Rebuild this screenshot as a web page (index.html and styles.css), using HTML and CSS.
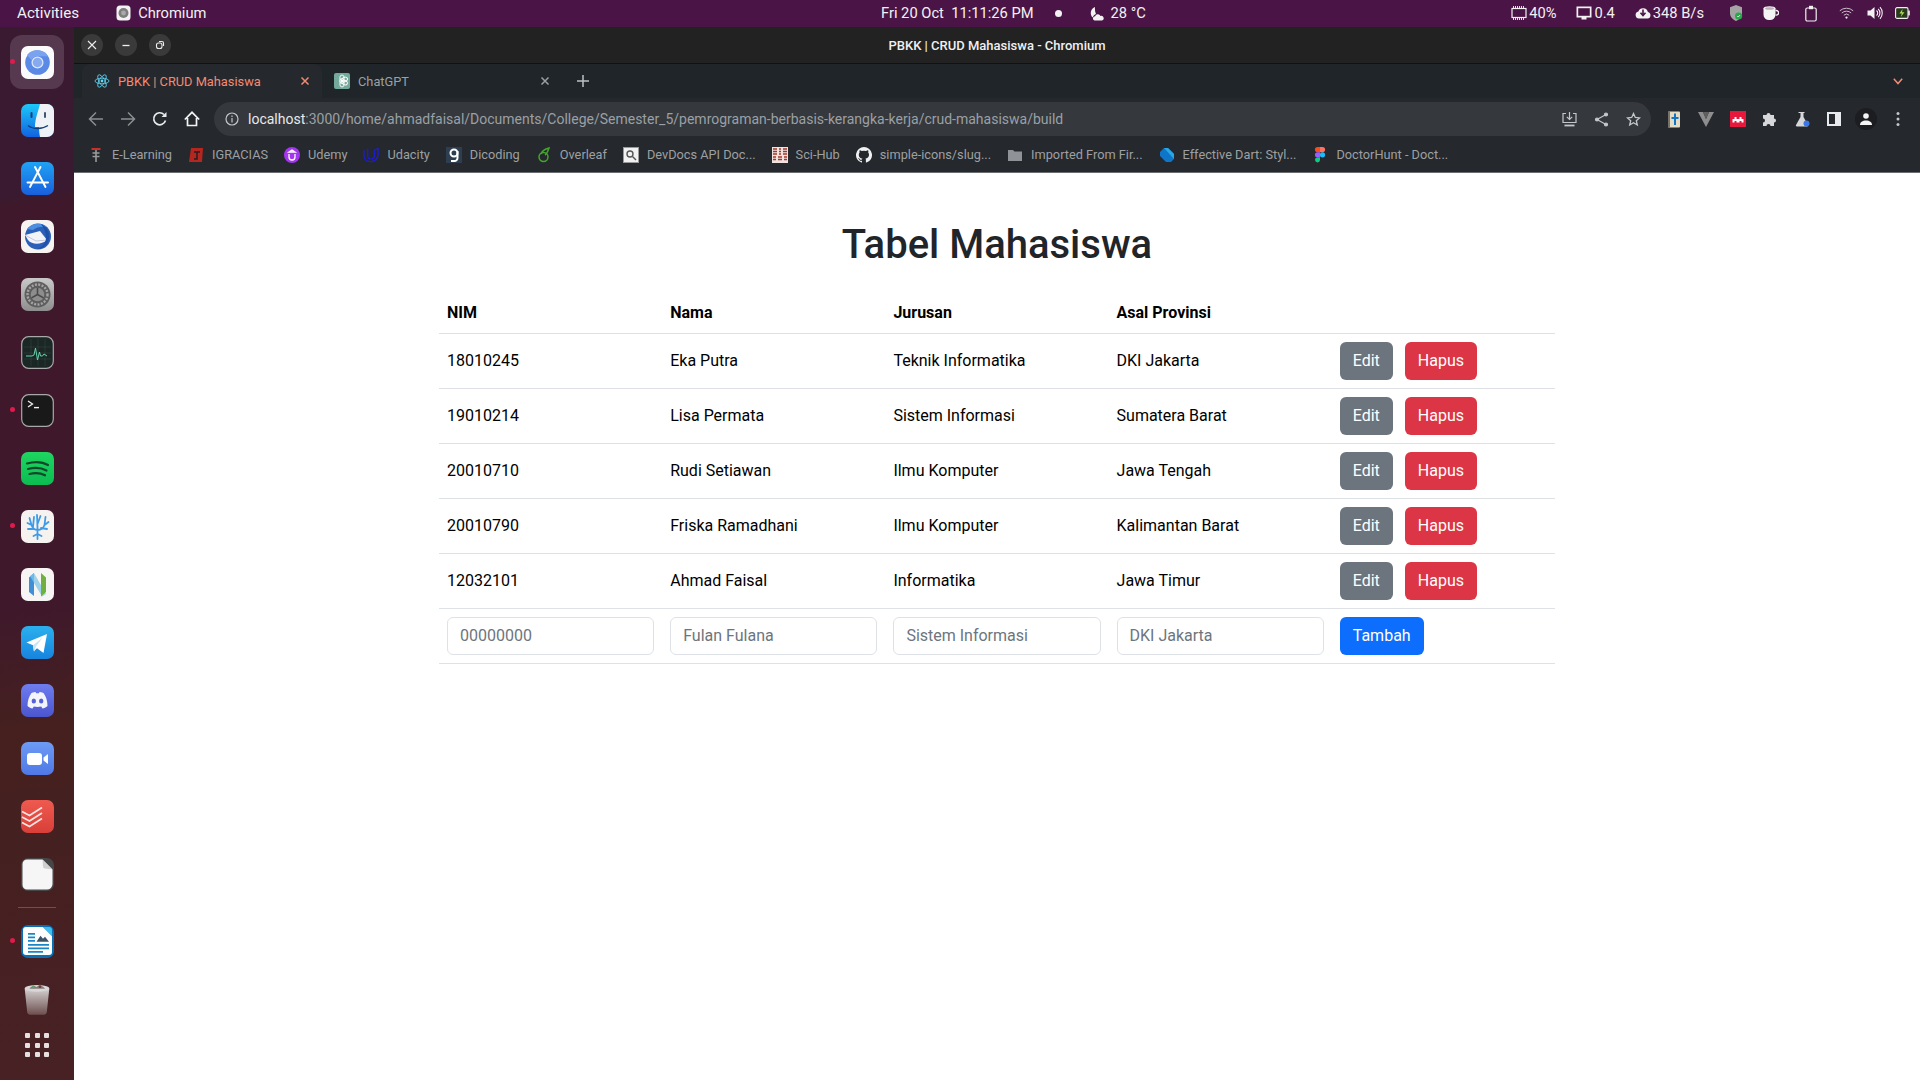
FILE: index.html
```html
<!DOCTYPE html>
<html lang="id">
<head>
    <meta charset="UTF-8">
    <title>PBKK | CRUD Mahasiswa</title>
    <link rel="stylesheet" href="styles.css">
</head>
<body>
    <!-- gnome top bar -->
    <div class="topbar">
        <div class="topbar-left">
            <span class="activities">Activities</span>
            <span class="app-menu">
                <svg width="15" height="16" viewBox="0 0 15 16"><rect x="0.5" y="0.5" width="14" height="15" rx="3.5" fill="#f2f2f2"/><circle cx="7.5" cy="8" r="5" fill="#7d7d7d"/><circle cx="7.5" cy="8" r="2.4" fill="#a9a9a9"/></svg>
                Chromium
            </span>
        </div>
        <div class="topbar-center">
            <span class="clock">Fri 20 Oct&nbsp; 11:11:26 PM</span>
            <span class="rec-dot"></span>
            <svg class="moon" width="15" height="15" viewBox="0 0 15 15"><path d="M6 1 A6.5 6.5 0 0 0 3.500 11.500 C4.500 9.500 5.500 8.500 7 8 C6 6 5.700 3.500 6 1Z" fill="#f2f2f2"/><path d="M5.500 14.500 a2.200 2.200 0 0 1 .6-4.300 a2.900 2.900 0 0 1 5.400-.3 a2.300 2.300 0 0 1 1.500 4.600z" fill="#f2f2f2"/></svg>
            <span>28 °C</span>
        </div>
        <div class="topbar-right">
            <span class="stat">
                <svg width="16" height="16" viewBox="0 0 16 16" fill="none" stroke="#f2f2f2"><rect x="1" y="3.500" width="14" height="9" stroke-width="1.200"/><path d="M2.500 1v2M4.500 1v2M6.500 1v2M8.500 1v2M10.500 1v2M12.500 1v2M2.500 13v2M4.500 13v2M6.500 13v2M8.500 13v2M10.500 13v2M12.500 13v2" stroke-width=".9"/></svg>
                40%
            </span>
            <span class="stat">
                <svg width="16" height="16" viewBox="0 0 16 16"><path d="M0.5 1.500h15v11h-5v2h-5v-2h-5z" fill="#f2f2f2"/><rect x="2.200" y="3.200" width="11.600" height="7.600" fill="#4b1446"/></svg>
                0.4
            </span>
            <span class="stat">
                <svg width="16" height="14" viewBox="0 0 16 14"><path d="M4 12.500 a3.600 3.600 0 0 1-.6-7.100 a5 5 0 0 1 9.500 .6 a3.300 3.300 0 0 1-.4 6.500z" fill="#f2f2f2"/><path d="M8 3.500v5M5.500 6.800L8 9.600l2.500-2.800" stroke="#4b1446" stroke-width="1.600" fill="none"/></svg>
                348 B/s
            </span>
            <span class="tray">
                <svg class="tray-shield" width="14" height="18" viewBox="0 0 14 18"><path d="M7 1 L13 3.200 V9 C13 13 10 15.600 7 17 C4 15.600 1 13 1 9 V3.200Z" fill="#a4a4a4"/><circle cx="9.600" cy="12" r="3.600" fill="#2aa84a"/><path d="M8.200 12l1 1 1.800-1.900" stroke="#fff" stroke-width=".8" fill="none"/></svg>
                <svg class="tray-cup" width="16" height="16" viewBox="0 0 16 16"><path d="M.5 3.500h12v6a5.500 5.500 0 0 1-5.500 5.500H6a5.500 5.500 0 0 1-5.500-5.500z" fill="#f4f4f4"/><ellipse cx="6.500" cy="3.500" rx="6" ry="2.300" fill="#f4f4f4"/><ellipse cx="6.500" cy="3.500" rx="4.500" ry="1.300" fill="#b9b3b8"/><path d="M12.500 5.500h.8a1.900 1.900 0 0 1 0 4.600h-.8" fill="none" stroke="#f4f4f4" stroke-width="1.300"/></svg>
                <svg class="tray-clip" width="12" height="17" viewBox="0 0 12 17" fill="none" stroke="#f2f2f2" stroke-width="1.200"><rect x="0.800" y="3" width="10.400" height="13" rx="1.500"/><rect x="4" y="0.800" width="4" height="3.400" fill="#f2f2f2" stroke="none"/></svg>
                <svg class="tray-wifi" width="15" height="12" viewBox="0 0 15 12" fill="none" stroke="#c9bcc7" stroke-width="1"><path d="M.8 3.800a10 10 0 0 1 13.400 0"/><path d="M2.800 6a7 7 0 0 1 9.400 0"/><path d="M4.800 8.200a4 4 0 0 1 5.400 0"/><circle cx="7.500" cy="10.600" r="1.100" fill="#f2f2f2" stroke="none"/></svg>
                <svg class="tray-vol" width="16" height="14" viewBox="0 0 16 14" fill="none" stroke="#f2f2f2" stroke-width="1.100"><path d="M0.500 4.500h3l4-3.500v12l-4-3.500h-3z" fill="#f2f2f2" stroke="none"/><path d="M9.500 4.500a3.200 3.200 0 0 1 0 5"/><path d="M11.200 2.800a6 6 0 0 1 0 8.400"/><path d="M13 1.200a8.600 8.600 0 0 1 0 11.600"/></svg>
                <svg width="15" height="12" viewBox="0 0 15 12"><rect x="0.600" y="0.600" width="12.400" height="10.800" rx="1.500" fill="#2b3a1e" stroke="#f2f2f2" stroke-width="1.100"/><rect x="13.200" y="3.600" width="1.600" height="4.800" fill="#f2f2f2"/><path d="M7.600 2 L4.400 6.600h2.400L5.800 10l3.600-4.800H7z" fill="#a6e05a"/></svg>
            </span>
        </div>
    </div>

    <div class="desktop">
        <!-- dock -->
        <div class="dock">
            <div class="dock-item active">
                <span class="running"></span>
                <svg class="dock-icon" viewBox="0 0 33 33"><rect width="33" height="33" rx="7" fill="#fbfbfb"/><circle cx="16.500" cy="16.500" r="12.300" fill="#5b8ae6"/><path d="M16.500 4.200a12.300 12.300 0 0 1 10.600 6H16.500a6.500 6.500 0 0 0-6 4L6 9A12.300 12.300 0 0 1 16.500 4.200z" fill="#7ba2ee"/><circle cx="16.500" cy="16.500" r="5.400" fill="#86aaf0" stroke="#d9e5fb" stroke-width="1.300"/></svg>
            </div>
            <div class="dock-item">
                <svg class="dock-icon" viewBox="0 0 33 33"><defs><linearGradient id="fn" x1="0" y1="0" x2="0" y2="1"><stop offset="0" stop-color="#1cc8fb"/><stop offset="1" stop-color="#1262e0"/></linearGradient></defs><rect width="33" height="33" rx="7" fill="url(#fn)"/><path d="M19 0h7a7 7 0 0 1 7 7v19a7 7 0 0 1-7 7H19c-.6-3-1-6-1-10h-4c0-8 3-15 5-23z" fill="#eef2f7"/><rect x="9.500" y="8" width="2" height="6" rx="1" fill="#123d7a"/><rect x="23" y="8" width="2" height="6" rx="1" fill="#41566f"/><path d="M7 21.500c5 4 14 4 20 0" fill="none" stroke="#123d7a" stroke-width="1.300"/></svg>
            </div>
            <div class="dock-item">
                <svg class="dock-icon" viewBox="0 0 33 33"><defs><linearGradient id="as" x1="0" y1="0" x2="0" y2="1"><stop offset="0" stop-color="#1ea3f5"/><stop offset="1" stop-color="#1a5fdc"/></linearGradient></defs><rect width="33" height="33" rx="7" fill="url(#as)"/><path d="M14 5l10.500 20M19.500 5L9 25M6.500 20.500h20.500" stroke="#fff" stroke-width="1.900" stroke-linecap="round" fill="none"/></svg>
            </div>
            <div class="dock-item">
                <svg class="dock-icon" viewBox="0 0 33 33"><rect width="33" height="33" rx="7" fill="#f7f3f1"/><circle cx="17" cy="16.500" r="13" fill="#2c5fb8"/><path d="M6 9c5-6 14-7 20-2-5-1-11 0-14 3z" fill="#4c8fe0"/><path d="M4 15l15-4 7 9c-6 5-15 5-19 0z" fill="#f2f3f8"/><path d="M4 15l11 6 11-1" fill="none" stroke="#b5bdd6" stroke-width=".8"/><path d="M20 4c7 3 10 11 7 18-2 4-6 7-11 7 5-2 9-6 9-11 0-6-2-10-5-14z" fill="#1f4fa6"/></svg>
            </div>
            <div class="dock-item">
                <svg class="dock-icon" viewBox="0 0 33 33"><defs><linearGradient id="st" x1="0" y1="0" x2="0" y2="1"><stop offset="0" stop-color="#c8c8c8"/><stop offset="1" stop-color="#8e8e8e"/></linearGradient></defs><rect width="33" height="33" rx="7" fill="url(#st)"/><circle cx="16.500" cy="16.500" r="13" fill="#5e5e5e"/><circle cx="16.500" cy="16.500" r="10" fill="none" stroke="#a4a4a4" stroke-width="2.400" stroke-dasharray="2 1.400"/><circle cx="16.500" cy="16.500" r="6.800" fill="#8d8d8d"/><path d="M16.500 16.500V9.700M16.500 16.500l6 3.400M16.500 16.500l-6 3.400" stroke="#4a4a4a" stroke-width="1.600"/></svg>
            </div>
            <div class="dock-item">
                <svg class="dock-icon" viewBox="0 0 33 33"><rect x=".7" y=".7" width="31.600" height="31.600" rx="7" fill="#1b2724" stroke="#a8a8a8" stroke-width="1.200"/><path d="M3 11h27M3 17h27M3 23h27M10 3v27M17 3v27M24 3v27" stroke="#33433f" stroke-width=".6"/><path d="M5 20h6l2-1 1.500-7 2 12 2-8 1 4h2l1.500-2 3 2" fill="none" stroke="#66d2ab" stroke-width="1"/></svg>
            </div>
            <div class="dock-item">
                <span class="running"></span>
                <svg class="dock-icon" viewBox="0 0 33 33"><rect x=".7" y=".7" width="31.600" height="31.600" rx="7" fill="#191919" stroke="#a8a8a8" stroke-width="1.200"/><path d="M7 7l4.500 3L7 13" fill="none" stroke="#f0f0f0" stroke-width="1.300"/><path d="M13 13.600h5" stroke="#f0f0f0" stroke-width="1.400"/></svg>
            </div>
            <div class="dock-item">
                <svg class="dock-icon" viewBox="0 0 33 33"><defs><linearGradient id="sp" x1="0" y1="0" x2="0" y2="1"><stop offset="0" stop-color="#1ed660"/><stop offset="1" stop-color="#0cbc52"/></linearGradient></defs><rect width="33" height="33" rx="7" fill="url(#sp)"/><path d="M6 11.500c7-2 15-2 21 1.500M7 17c6-1.600 13-1.400 18.500 1.500M8.500 22c5-1.200 11-1 15.500 1.300" fill="none" stroke="#14472a" stroke-width="2.200" stroke-linecap="round"/></svg>
            </div>
            <div class="dock-item">
                <span class="running"></span>
                <svg class="dock-icon" viewBox="0 0 33 33"><rect width="33" height="33" rx="7" fill="#f6f2ef"/><path d="M16.500 29V18M16.500 20c-3 0-5-2-6-5M10.500 15l-2-7M10.500 15l-4-2M12 17l1-10M16.500 18l-.5-13M16.500 14l3-8M16.500 20c3 0 6-2 7-5M23.500 15l1-8M23.500 15l4-3M20 18l6 1M13 19l-6 0M16.500 24l4 2M16.500 24l-4 2" fill="none" stroke="#3f9be6" stroke-width="1.800" stroke-linecap="round"/></svg>
            </div>
            <div class="dock-item">
                <svg class="dock-icon" viewBox="0 0 33 33"><rect width="33" height="33" rx="7" fill="#f6f5f3"/><path d="M8 9.500l5-4.500v23l-5-4z" fill="#3f8fd6"/><path d="M13 5l12 21-4 2.500L9 8z" fill="#7fc5e6" opacity=".75"/><path d="M20 5l5 4.500V24l-5 4.500z" fill="#6fb03e"/></svg>
            </div>
            <div class="dock-item">
                <svg class="dock-icon" viewBox="0 0 33 33"><defs><linearGradient id="tg" x1="0" y1="0" x2="0" y2="1"><stop offset="0" stop-color="#2bb0ee"/><stop offset="1" stop-color="#1784de"/></linearGradient></defs><rect width="33" height="33" rx="7" fill="url(#tg)"/><path d="M5.500 16.500L26 8l-3.500 19-6.500-4.800-3.200 3-.8-6z" fill="#fff"/><path d="M12 19.200l10-8-7 9-1.800 5.500z" fill="#cde4f3"/></svg>
            </div>
            <div class="dock-item">
                <svg class="dock-icon" viewBox="0 0 33 33"><defs><linearGradient id="dc" x1="0" y1="0" x2="0" y2="1"><stop offset="0" stop-color="#6e7df0"/><stop offset="1" stop-color="#4b55cf"/></linearGradient></defs><rect width="33" height="33" rx="7" fill="url(#dc)"/><path d="M10.500 9c2-.7 3.500-1 4-1l.6 1.200h2.800L18.500 8c.5 0 2 .3 4 1 2.500 3.500 4 7.500 4 13-1.700 1.500-3.500 2.300-5 2.500l-1.300-2c-2.500.6-4.800.6-7.400 0l-1.300 2c-1.500-.2-3.300-1-5-2.500 0-5.500 1.500-9.500 4-13z" fill="#f4f4fb"/><ellipse cx="12.800" cy="17" rx="2.200" ry="2.500" fill="#5862d8"/><ellipse cx="20.200" cy="17" rx="2.200" ry="2.500" fill="#5862d8"/></svg>
            </div>
            <div class="dock-item">
                <svg class="dock-icon" viewBox="0 0 33 33"><defs><linearGradient id="zm" x1="0" y1="0" x2="0" y2="1"><stop offset="0" stop-color="#6d9bf5"/><stop offset="1" stop-color="#4f78e6"/></linearGradient></defs><rect width="33" height="33" rx="7" fill="url(#zm)"/><rect x="6" y="11" width="15" height="12" rx="3" fill="#fff"/><path d="M22.500 15.500l4.500-3.500v10l-4.500-3.500z" fill="#fff"/></svg>
            </div>
            <div class="dock-item">
                <svg class="dock-icon" viewBox="0 0 33 33"><defs><linearGradient id="td" x1="0" y1="0" x2="0" y2="1"><stop offset="0" stop-color="#ee5a50"/><stop offset="1" stop-color="#d83f38"/></linearGradient></defs><rect width="33" height="33" rx="7" fill="url(#td)"/><path d="M1 11.500l7.500 4 12.500-8M1 17l7.500 4 12.500-8M1 22.500l7.500 4 12.500-8" fill="none" stroke="#fbe5e2" stroke-width="1.700"/></svg>
            </div>
            <div class="dock-item">
                <svg class="dock-icon" viewBox="0 0 33 33"><rect width="33" height="33" rx="7" fill="#464646"/><path d="M6 1.500h15.500l10 10V26a5.500 5.500 0 0 1-5.500 5.500H6A4.500 4.500 0 0 1 1.500 27V6A4.500 4.500 0 0 1 6 1.500z" fill="#f6f6f6"/><path d="M21.500 1.500l.5 7a2 2 0 0 0 2 2l7.500 1z" fill="#cfcfcf"/></svg>
            </div>
            <div class="dock-sep"></div>
            <div class="dock-item">
                <span class="running"></span>
                <svg class="dock-icon" viewBox="0 0 33 33"><rect width="33" height="33" rx="7" fill="#0a6fb5"/><path d="M2 5a3 3 0 0 1 3-3h17l9 9v16a3 3 0 0 1-3 3H5a3 3 0 0 1-3-3z" fill="#fdfdfd"/><path d="M22 2h6a3 3 0 0 1 3 3v6z" fill="#3fc0ec"/><path d="M7 8h7v1.700H7zM7 11.500h7v1.700H7zM7 15h7v1.700H7zM7 19h21v1.700H7zM7 22.500h21v1.700H7zM7 26h15v1.700H7z" fill="#1b86c5"/><path d="M15.500 16.800l4-6 2.500 3 2-2 4 5z" fill="#3c5566"/></svg>
            </div>
            <div class="dock-item">
                <svg class="dock-icon trash" viewBox="0 0 33 38"><defs><linearGradient id="tr" x1="0" y1="0" x2="0" y2="1"><stop offset="0" stop-color="#d3cfcf"/><stop offset="1" stop-color="#6d4f4f"/></linearGradient></defs><path d="M2 7h29l-3 28a3 3 0 0 1-3 2.500H8A3 3 0 0 1 5 35z" fill="url(#tr)"/><ellipse cx="16.500" cy="6.500" rx="14.500" ry="4" fill="#d8d6d6"/><path d="M8 6l4-3 4 2 4-3 4 3 2 2-18 0z" fill="#867c7c"/><circle cx="12" cy="5" r="1.500" fill="#54a86a"/><circle cx="20" cy="4.500" r="1.500" fill="#704030"/></svg>
            </div>
            <div class="dock-item apps">
                <div class="apps-grid"><i></i><i></i><i></i><i></i><i></i><i></i><i></i><i></i><i></i></div>
            </div>
        </div>

        <div class="window">
            <div class="titlebar">
                <div class="win-buttons">
                    <span class="win-btn"><svg width="10" height="10" viewBox="0 0 10 10"><path d="M1 1l8 8M9 1l-8 8" stroke="#eee" stroke-width="1.100"/></svg></span>
                    <span class="win-btn"><svg width="10" height="10" viewBox="0 0 10 10"><path d="M1.500 5.500h7" stroke="#eee" stroke-width="1.300"/></svg></span>
                    <span class="win-btn"><svg width="10" height="10" viewBox="0 0 10 10" fill="none" stroke="#eee" stroke-width="1.100"><rect x="1.500" y="3" width="5.500" height="5.500" rx="2"/><path d="M4 1.500h3a1.500 1.500 0 0 1 1.500 1.500v3"/></svg></span>
                </div>
                <div class="win-title">PBKK | CRUD Mahasiswa - Chromium</div>
            </div>

            <div class="tabstrip">
                <div class="tab active">
                    <svg class="favicon" width="16" height="16" viewBox="0 0 16 16" fill="none" stroke="#61dafb" stroke-width=".8"><ellipse cx="8" cy="8" rx="7" ry="2.800"/><ellipse cx="8" cy="8" rx="7" ry="2.800" transform="rotate(60 8 8)"/><ellipse cx="8" cy="8" rx="7" ry="2.800" transform="rotate(120 8 8)"/><circle cx="8" cy="8" r="1.400" fill="#61dafb" stroke="none"/></svg>
                    <span class="tab-title">PBKK | CRUD Mahasiswa</span>
                    <svg class="tab-close" width="10" height="10" viewBox="0 0 10 10"><path d="M1.500 1.500l7 7M8.500 1.500l-7 7" stroke="#f28b74" stroke-width="1.500"/></svg>
                </div>
                <div class="tab">
                    <svg class="favicon" width="16" height="16" viewBox="0 0 16 16"><rect width="16" height="16" rx="2" fill="#74aa9c"/><g fill="none" stroke="#fff" stroke-width=".9"><circle cx="8" cy="8" r="2.400"/><ellipse cx="8" cy="5" rx="2.200" ry="3"/><ellipse cx="8" cy="11" rx="2.200" ry="3"/><ellipse cx="8" cy="5" rx="2.200" ry="3" transform="rotate(60 8 8)"/><ellipse cx="8" cy="5" rx="2.200" ry="3" transform="rotate(120 8 8)"/></g></svg>
                    <span class="tab-title">ChatGPT</span>
                    <svg class="tab-close" width="10" height="10" viewBox="0 0 10 10"><path d="M1.500 1.500l7 7M8.500 1.500l-7 7" stroke="#9aa0a6" stroke-width="1.500"/></svg>
                </div>
                <svg class="new-tab" width="12" height="12" viewBox="0 0 12 12"><path d="M6 0v12M0 6h12" stroke="#bdc1c6" stroke-width="1.500"/></svg>
                <svg class="tab-search" width="10" height="7" viewBox="0 0 10 7"><path d="M.8.8L5 5.500 9.200.8" fill="none" stroke="#f28b74" stroke-width="1.500"/></svg>
            </div>

            <div class="toolbar">
                <span class="tool-btn"><svg width="16" height="16" viewBox="0 0 16 16" fill="none" stroke="#8b8e92" stroke-width="1.500"><path d="M15 8H2M8 1.500L1.500 8 8 14.500"/></svg></span>
                <span class="tool-btn"><svg width="16" height="16" viewBox="0 0 16 16" fill="none" stroke="#8b8e92" stroke-width="1.500"><path d="M1 8h13M8 1.500L14.500 8 8 14.500"/></svg></span>
                <span class="tool-btn"><svg width="16" height="16" viewBox="0 0 16 16" fill="none" stroke="#e8eaed" stroke-width="1.700"><path d="M13.500 9.500A6 6 0 1 1 12 3.500"/><path d="M14.500 1v5h-5z" fill="#e8eaed" stroke="none"/></svg></span>
                <span class="tool-btn"><svg width="16" height="16" viewBox="0 0 16 16" fill="none" stroke="#f1f3f4" stroke-width="1.700"><path d="M.8 8.500L8 1.300l7.200 7.200M3.500 7v7.500h9V7"/></svg></span>
                <div class="omnibox">
                    <svg class="info" width="14" height="14" viewBox="0 0 14 14" fill="none" stroke="#c4c7ca" stroke-width="1.200"><circle cx="7" cy="7" r="6"/><path d="M7 6v4.500M7 3.500v1.500"/></svg>
                    <span class="url"><span class="host">localhost</span>:3000/home/ahmadfaisal/Documents/College/Semester_5/pemrograman-berbasis-kerangka-kerja/crud-mahasiswa/build</span>
                    <span class="omni-actions">
                        <svg width="15" height="15" viewBox="0 0 15 15" fill="none" stroke="#c4c7ca" stroke-width="1.200"><path d="M4 1.500H1v9h13v-9h-3"/><path d="M7.500 0v7M4.800 4.800l2.700 2.700 2.700-2.700"/><path d="M2.500 13.500h10" stroke-width="1.800"/></svg>
                        <svg width="15" height="15" viewBox="0 0 15 15" fill="#c4c7ca" stroke="#c4c7ca" stroke-width="1.200"><circle cx="12" cy="2.500" r="1.500"/><circle cx="3" cy="7.500" r="1.500"/><circle cx="12" cy="12.500" r="1.500"/><path d="M12 2.500l-9 5 9 5" fill="none"/></svg>
                        <svg width="15" height="15" viewBox="0 0 15 15" fill="none" stroke="#c4c7ca" stroke-width="1.300"><path d="M7.500 1.500l1.800 4 4.200.4-3.200 2.800 1 4.300-3.800-2.300-3.800 2.300 1-4.300L1.500 5.900l4.200-.4z"/></svg>
                    </span>
                </div>
                <div class="ext-buttons">
                    <span class="tool-btn"><svg width="14" height="17" viewBox="0 0 14 17"><rect x="1" y=".5" width="12" height="16" rx="1" fill="#e4dcc4"/><rect x="1" y=".5" width="2" height="16" fill="#77736a"/><path d="M7 2.500h2V6h2.500v2H9v6H7V8H4.500V6H7z" fill="#1373c4"/></svg></span>
                    <span class="tool-btn"><svg width="16" height="15" viewBox="0 0 16 15"><path d="M0 0h5l3 7 3-7h5L8 15z" fill="#8e8e8e"/><path d="M5 0h6L8 7z" fill="#606060"/></svg></span>
                    <span class="tool-btn"><svg width="16" height="16" viewBox="0 0 16 16"><rect width="16" height="16" fill="#e8173c"/><path d="M2.500 11.500V8h2V6h2v2h3V6h2v2h2v3.500h-2V10h-2v1.500h-3V10h-2v1.500z" fill="#fff"/></svg></span>
                    <span class="tool-btn"><svg width="16" height="16" viewBox="0 0 16 16"><path d="M1 4h3.500a2 2 0 1 1 4 0H12v3.500a2 2 0 1 1 0 4V15H8.500a2 2 0 1 0-4 0H1v-3.500a2 2 0 1 0 0-4z" fill="#d5d7da"/></svg></span>
                    <span class="tool-btn"><svg width="15" height="16" viewBox="0 0 15 16"><path d="M3.500 1h6v1H8.500v4L13 14a1 1 0 0 1-1 1.500H2A1 1 0 0 1 1 14l4.500-8V2h-2z" fill="#d5d7da"/><circle cx="11.500" cy="12.500" r="3" fill="#3b78e7"/></svg></span>
                    <span class="tool-btn"><svg width="14" height="14" viewBox="0 0 14 14"><rect width="14" height="14" fill="#e8eaed"/><rect x="2" y="2" width="6" height="10" fill="#25282c"/></svg></span>
                    <span class="tool-btn"><span class="avatar"><svg width="12" height="12" viewBox="0 0 12 12"><circle cx="6" cy="3" r="2.800" fill="#f4f4f4"/><path d="M0 12c0-3 2.500-4.500 6-4.500s6 1.500 6 4.500z" fill="#f4f4f4"/></svg></span></span>
                    <span class="tool-btn"><svg width="4" height="16" viewBox="0 0 4 16" fill="#c4c7ca"><circle cx="2" cy="2.500" r="1.500"/><circle cx="2" cy="8" r="1.500"/><circle cx="2" cy="13.500" r="1.500"/></svg></span>
                </div>
            </div>

            <div class="bookmarks">
                <span class="bookmark"><svg viewBox="0 0 11 16"><path d="M1 1h9v2H1z" fill="#c9302c"/><path d="M5.500 3v12M2 6h7M2 9.500h7" stroke="#9a9a9a" stroke-width="1.600"/></svg>E-Learning</span>
                <span class="bookmark"><svg viewBox="0 0 16 16"><path d="M3 1h12l-1 14H1z" fill="#b4261f"/><path d="M6 5h6M9 5v7H6" fill="none" stroke="#2a1d1d" stroke-width="1.500"/></svg>IGRACIAS</span>
                <span class="bookmark"><svg viewBox="0 0 16 16"><circle cx="8" cy="8" r="8" fill="#a435f0"/><path d="M5 7v3a3 3 0 0 0 6 0V7M8 3L5 5h6z" fill="none" stroke="#fff" stroke-width="1.300"/></svg>Udemy</span>
                <span class="bookmark"><svg viewBox="0 0 17 16" fill="none" stroke="#1c1ce0" stroke-width="1.300"><path d="M1 2.500v6c0 4 3 6.500 7 6.500s8-3 8-7V1l-4 2v6c0 2-1 3-3 3M5 1v8c0 2 1 3 3 3"/></svg>Udacity</span>
                <span class="bookmark"><svg viewBox="0 0 16 16"><rect width="16" height="16" fill="#2d3e50"/><circle cx="8" cy="6" r="3.500" fill="none" stroke="#fff" stroke-width="2"/><path d="M11.500 4v7a3 3 0 0 1-3 3H5" fill="none" stroke="#fff" stroke-width="2"/></svg>Dicoding</span>
                <span class="bookmark"><svg viewBox="0 0 12 16" fill="none" stroke="#43a52d" stroke-width="1.500"><circle cx="5.500" cy="10" r="4.500"/><path d="M3 7c1-3 4-5 8-6-1 3-2 6-4 7"/></svg>Overleaf</span>
                <span class="bookmark"><svg viewBox="0 0 16 16"><rect x=".5" y=".5" width="15" height="15" fill="#f1f1f1" stroke="#999"/><circle cx="7" cy="7" r="3" fill="none" stroke="#555" stroke-width="1.400"/><path d="M9.500 9.500L13 13" stroke="#555" stroke-width="1.400"/></svg>DevDocs API Doc...</span>
                <span class="bookmark"><svg viewBox="0 0 16 16"><rect width="16" height="16" fill="#f0e3df"/><path d="M1 2h4M11 2h4M7 2h2M1 4.500h4M1 7h4M7 4.500h2M11 4.500h4M11 7h4M7 7h2M1 10h3M6 10h4M12 10h3M1 12.500h3M6 12.500h4M12 12.500h3" stroke="#a3392c" stroke-width="1.400"/></svg>Sci-Hub</span>
                <span class="bookmark"><svg viewBox="0 0 16 16"><path d="M8 0a8 8 0 0 0-2.500 15.600c.4.1.5-.2.5-.4v-1.400c-2.200.5-2.700-1-2.700-1-.4-.9-.9-1.200-.9-1.200-.7-.5 0-.5 0-.5.8.1 1.200.8 1.200.8.700 1.200 1.900.9 2.300.7.100-.5.300-.9.500-1.100-1.800-.2-3.600-.9-3.600-4 0-.9.300-1.600.8-2.100-.1-.2-.4-1 .1-2.100 0 0 .7-.2 2.200.8a7.700 7.700 0 0 1 4 0c1.500-1 2.200-.8 2.200-.8.500 1.100.2 1.900.1 2.100.5.500.8 1.200.8 2.100 0 3.100-1.900 3.800-3.600 4 .3.200.5.700.5 1.500v2.200c0 .2.100.5.600.4A8 8 0 0 0 8 0z" fill="#f1f1f1"/></svg>simple-icons/slug...</span>
                <span class="bookmark"><svg viewBox="0 0 16 16"><path d="M1 3h5l1.500 1.500H15V14H1z" fill="#8f9296"/></svg>Imported From Fir...</span>
                <span class="bookmark"><svg viewBox="0 0 16 16"><path d="M5 1h4l6 6v5l-3 3H7L1 9V5z" fill="#0f75c9"/><path d="M5 1h4l6 6v5z" fill="#2aa6e6"/></svg>Effective Dart: Styl...</span>
                <span class="bookmark"><svg viewBox="0 0 11 16"><path d="M5.500 0H3a2.500 2.500 0 0 0 0 5.200h2.500z" fill="#f24e1e"/><path d="M5.500 0H8a2.500 2.500 0 0 1 0 5.200H5.500z" fill="#ff7262"/><path d="M5.500 5.200H3a2.500 2.500 0 0 0 0 5.200h2.500z" fill="#a259ff"/><circle cx="8" cy="7.800" r="2.600" fill="#1abcfe"/><path d="M3 10.400h2.500V13a2.500 2.500 0 1 1-2.500-2.600z" fill="#0acf83"/></svg>DoctorHunt - Doct...</span>
            </div>

            <!-- halaman -->
            <div class="page">
                <div class="container">
                    <h1 class="page-title">Tabel Mahasiswa</h1>
                    <table class="mhs-table">
                        <thead>
                            <tr><th>NIM</th><th>Nama</th><th>Jurusan</th><th>Asal Provinsi</th><th></th></tr>
                        </thead>
                        <tbody>
                            <tr>
                                <td>18010245</td><td>Eka Putra</td><td>Teknik Informatika</td><td>DKI Jakarta</td>
                                <td><button class="btn btn-edit">Edit</button><button class="btn btn-hapus">Hapus</button></td>
                            </tr>
                            <tr>
                                <td>19010214</td><td>Lisa Permata</td><td>Sistem Informasi</td><td>Sumatera Barat</td>
                                <td><button class="btn btn-edit">Edit</button><button class="btn btn-hapus">Hapus</button></td>
                            </tr>
                            <tr>
                                <td>20010710</td><td>Rudi Setiawan</td><td>Ilmu Komputer</td><td>Jawa Tengah</td>
                                <td><button class="btn btn-edit">Edit</button><button class="btn btn-hapus">Hapus</button></td>
                            </tr>
                            <tr>
                                <td>20010790</td><td>Friska Ramadhani</td><td>Ilmu Komputer</td><td>Kalimantan Barat</td>
                                <td><button class="btn btn-edit">Edit</button><button class="btn btn-hapus">Hapus</button></td>
                            </tr>
                            <tr>
                                <td>12032101</td><td>Ahmad Faisal</td><td>Informatika</td><td>Jawa Timur</td>
                                <td><button class="btn btn-edit">Edit</button><button class="btn btn-hapus">Hapus</button></td>
                            </tr>
                            <tr>
                                <td><input class="field" placeholder="00000000"></td>
                                <td><input class="field" placeholder="Fulan Fulana"></td>
                                <td><input class="field" placeholder="Sistem Informasi"></td>
                                <td><input class="field" placeholder="DKI Jakarta"></td>
                                <td><button class="btn btn-tambah">Tambah</button></td>
                            </tr>
                        </tbody>
                    </table>
                </div>
            </div>
        </div>
    </div>
</body>
</html>
```

FILE: styles.css
```css
* {
    box-sizing: border-box;
}

body {
    margin: 0;
    width: 1920px;
    height: 1080px;
    overflow: hidden;
    display: flex;
    flex-direction: column;
    font-family: Roboto, "Liberation Sans", sans-serif;
    background-color: #fff;
}

svg {
    display: block;
    flex-shrink: 0;
}

/* top bar */
.topbar {
    height: 27px;
    padding-bottom: 1px;
    display: flex;
    align-items: center;
    background-color: #4b1446;
    color: #f2f2f2;
    font-size: 14.7px;
}

.topbar-left {
    width: 881px;
    display: flex;
    align-items: center;
    padding-left: 17px;
}

.activities {
    font-size: 15.2px;
}

.app-menu {
    display: flex;
    align-items: center;
    gap: 7px;
    margin-left: 37px;
}

.topbar-center {
    display: flex;
    align-items: center;
}

.rec-dot {
    width: 7px;
    height: 7px;
    border-radius: 50%;
    background-color: #f2f2f2;
    margin: 0 27px 0 21px;
}

.moon {
    margin-right: 7px;
}

.topbar-right {
    margin-left: auto;
    display: flex;
    align-items: center;
    padding-right: 10px;
}

.stat {
    display: flex;
    align-items: center;
    gap: 2px;
    margin-right: 20px;
}

.tray {
    display: flex;
    align-items: center;
    margin-left: 5px;
}

.tray-shield {
    margin-right: 20px;
}

.tray-cup {
    margin-right: 26px;
}

.tray-clip {
    margin-right: 22px;
}

.tray-wifi {
    margin-right: 13px;
}

.tray-vol {
    margin-right: 12px;
}

/* dock */
.desktop {
    flex: 1;
    display: flex;
    min-height: 0;
}

.dock {
    width: 74px;
    flex-shrink: 0;
    padding-top: 6px;
    display: flex;
    flex-direction: column;
    align-items: center;
    background: linear-gradient(172deg, #3a1a30 0%, #3a1a30 16%, #3f192b 17%, #3f192b 55%, #45201f 66%, #472124 100%);
}

.dock-item {
    position: relative;
    width: 54px;
    height: 58px;
    display: flex;
    align-items: center;
    justify-content: center;
    flex-shrink: 0;
}

.dock-item.active {
    background-color: #56394f;
    border-radius: 12px;
    height: 54px;
    margin: 2px 0;
}

.dock-icon {
    width: 33px;
    height: 33px;
}

.dock-icon.trash {
    width: 28px;
    height: 34px;
}

.running {
    position: absolute;
    left: 0;
    top: 26px;
    width: 5px;
    height: 5px;
    border-radius: 50%;
    background-color: #e01b4c;
}

.dock-item.active .running {
    top: 24px;
}

.dock-sep {
    width: 38px;
    height: 1px;
    background-color: #6a5355;
    margin: 4px 0;
    flex-shrink: 0;
}

.dock-item.apps {
    height: 34px;
}

.apps-grid {
    display: grid;
    grid-template-columns: repeat(3, 5px);
    gap: 4.3px;
}

.apps-grid i {
    width: 5px;
    height: 5px;
    background-color: #e6e0e0;
    border-radius: 1px;
}

/* browser */
.window {
    flex: 1;
    min-width: 0;
    display: flex;
    flex-direction: column;
}

.titlebar {
    height: 37px;
    background-color: #222;
    border-bottom: 1px solid #111;
    display: grid;
    grid-template-columns: 1fr auto 1fr;
    align-items: center;
    padding: 0 7px;
}

.win-buttons {
    display: flex;
    gap: 12px;
}

.win-btn {
    width: 22px;
    height: 22px;
    border-radius: 50%;
    background-color: #3a3a3a;
    display: flex;
    align-items: center;
    justify-content: center;
}

.win-title {
    color: #f0f0f0;
    font-size: 13px;
    font-weight: 500;
}

.tabstrip {
    height: 34px;
    background-color: #1f2529;
    display: flex;
    align-items: center;
    padding-left: 8px;
}

.tab {
    width: 240px;
    height: 34px;
    display: flex;
    align-items: center;
    padding: 0 12px;
    color: #9aa0a6;
    font-size: 12.8px;
}

.tab.active {
    background-color: #25282c;
    border-radius: 8px 8px 0 0;
    color: #f28b74;
}

.tab-title {
    margin-left: 8px;
    flex: 1;
}

.new-tab {
    margin-left: 15px;
}

.tab-search {
    margin-left: auto;
    margin-right: 17px;
}

.toolbar {
    height: 40px;
    background-color: #25282c;
    display: flex;
    align-items: flex-start;
    padding: 4px 6px 0;
}

.tool-btn {
    width: 32px;
    height: 34px;
    display: flex;
    align-items: center;
    justify-content: center;
    flex-shrink: 0;
}

.omnibox {
    flex: 1;
    height: 34px;
    margin-left: 6px;
    background-color: #35383c;
    border-radius: 17px;
    display: flex;
    align-items: center;
    padding: 0 10px 0 11px;
}

.info {
    margin-right: 9px;
}

.url {
    flex: 1;
    color: #9aa0a6;
    font-size: 14px;
    white-space: nowrap;
}

.host {
    color: #e8eaed;
}

.omni-actions {
    display: flex;
    gap: 17px;
}

.ext-buttons {
    display: flex;
    margin-left: 7px;
}

.avatar {
    width: 22px;
    height: 22px;
    border-radius: 50%;
    background-color: #1b1d20;
    display: flex;
    align-items: center;
    justify-content: center;
}

.bookmarks {
    height: 35px;
    background-color: #25282c;
    border-bottom: 1px solid #6a6d70;
    display: flex;
    align-items: center;
    padding: 0 0 1px 14px;
    gap: 16px;
}

.bookmark {
    display: flex;
    align-items: center;
    gap: 8px;
    color: #9da0a3;
    font-size: 12.75px;
    white-space: nowrap;
}

.bookmark svg {
    width: 16px;
    height: 16px;
}

/* halaman */
.page {
    flex: 1;
    background-color: #fff;
}

.container {
    width: 1140px;
    margin: 0 auto;
    padding: 0 12px;
}

.page-title {
    margin: 48px 0 24px;
    text-align: center;
    font-size: 40px;
    font-weight: 500;
    line-height: 48px;
    color: #212529;
}

.mhs-table {
    width: 100%;
    table-layout: fixed;
    border-collapse: collapse;
    font-size: 16px;
    line-height: 24px;
    color: #000;
}

.mhs-table th,
.mhs-table td {
    padding: 8px;
    text-align: left;
    border-bottom: 1px solid #dee2e6;
}

.mhs-table th {
    font-weight: 700;
}

.btn {
    height: 38px;
    padding: 6px 12px;
    border: 1px solid transparent;
    border-radius: 6px;
    color: #fff;
    font-family: inherit;
    font-size: 16px;
    line-height: 24px;
}

.btn-edit {
    background-color: #6c757d;
    margin-right: 12px;
}

.btn-hapus {
    background-color: #dc3545;
}

.btn-tambah {
    background-color: #0d6efd;
}

.field {
    display: block;
    width: 100%;
    height: 38px;
    padding: 5px 12px 7px;
    border: 1px solid #dee2e6;
    border-radius: 6px;
    font-family: inherit;
    font-size: 16px;
    line-height: 24px;
    color: #212529;
}

.field::placeholder {
    color: #6c757d;
    opacity: 1;
}
```
